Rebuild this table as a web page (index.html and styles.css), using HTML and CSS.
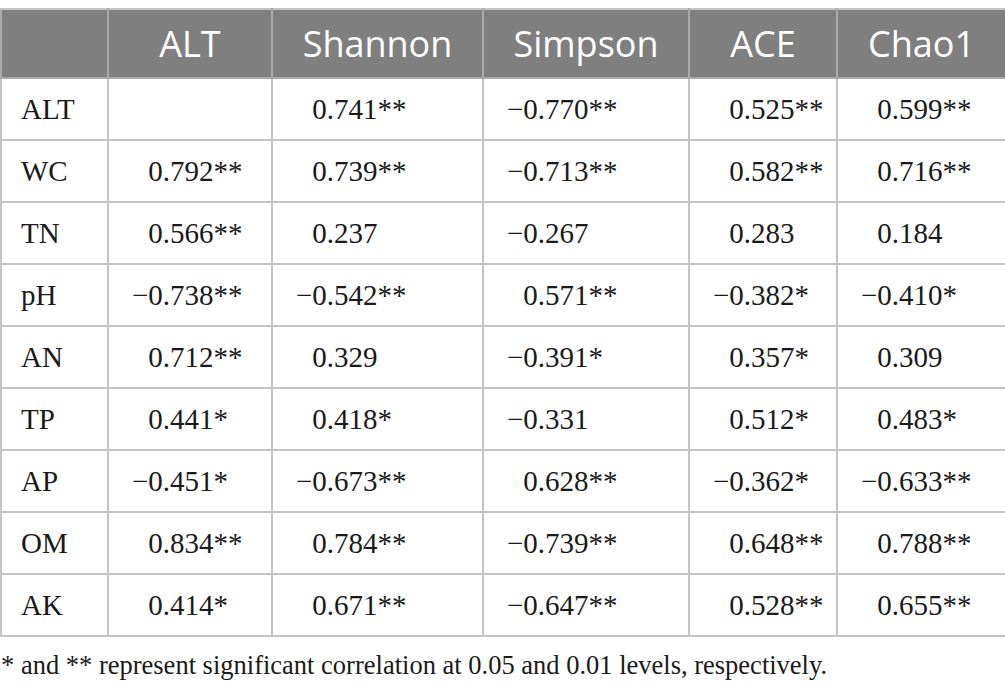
FILE: index.html
```html
<!DOCTYPE html>
<html lang="en">
<head>
    <meta charset="UTF-8">
    <title>Correlation table</title>
    <link rel="stylesheet" href="styles.css">
</head>
<body>
    <table class="corr">
        <colgroup>
            <col class="c-label">
            <col class="c-alt">
            <col class="c-shannon">
            <col class="c-simpson">
            <col class="c-ace">
            <col class="c-chao">
        </colgroup>
        <thead>
            <tr>
                <th></th>
                <th>ALT</th>
                <th>Shannon</th>
                <th>Simpson</th>
                <th>ACE</th>
                <th>Chao1</th>
            </tr>
        </thead>
        <tbody>
            <tr>
                <td>ALT</td>
                <td></td>
                <td><span class="sign">−</span>0.741**</td>
                <td>−0.770**</td>
                <td><span class="sign">−</span>0.525**</td>
                <td><span class="sign">−</span>0.599**</td>
            </tr>
            <tr>
                <td>WC</td>
                <td><span class="sign">−</span>0.792**</td>
                <td><span class="sign">−</span>0.739**</td>
                <td>−0.713**</td>
                <td><span class="sign">−</span>0.582**</td>
                <td><span class="sign">−</span>0.716**</td>
            </tr>
            <tr>
                <td>TN</td>
                <td><span class="sign">−</span>0.566**</td>
                <td><span class="sign">−</span>0.237</td>
                <td>−0.267</td>
                <td><span class="sign">−</span>0.283</td>
                <td><span class="sign">−</span>0.184</td>
            </tr>
            <tr>
                <td>pH</td>
                <td>−0.738**</td>
                <td>−0.542**</td>
                <td><span class="sign">−</span>0.571**</td>
                <td>−0.382*</td>
                <td>−0.410*</td>
            </tr>
            <tr>
                <td>AN</td>
                <td><span class="sign">−</span>0.712**</td>
                <td><span class="sign">−</span>0.329</td>
                <td>−0.391*</td>
                <td><span class="sign">−</span>0.357*</td>
                <td><span class="sign">−</span>0.309</td>
            </tr>
            <tr>
                <td>TP</td>
                <td><span class="sign">−</span>0.441*</td>
                <td><span class="sign">−</span>0.418*</td>
                <td>−0.331</td>
                <td><span class="sign">−</span>0.512*</td>
                <td><span class="sign">−</span>0.483*</td>
            </tr>
            <tr>
                <td>AP</td>
                <td>−0.451*</td>
                <td>−0.673**</td>
                <td><span class="sign">−</span>0.628**</td>
                <td>−0.362*</td>
                <td>−0.633**</td>
            </tr>
            <tr>
                <td>OM</td>
                <td><span class="sign">−</span>0.834**</td>
                <td><span class="sign">−</span>0.784**</td>
                <td>−0.739**</td>
                <td><span class="sign">−</span>0.648**</td>
                <td><span class="sign">−</span>0.788**</td>
            </tr>
            <tr>
                <td>AK</td>
                <td><span class="sign">−</span>0.414*</td>
                <td><span class="sign">−</span>0.671**</td>
                <td>−0.647**</td>
                <td><span class="sign">−</span>0.528**</td>
                <td><span class="sign">−</span>0.655**</td>
            </tr>
        </tbody>
    </table>
    <p class="note">* and ** represent significant correlation at 0.05 and 0.01 levels, respectively.</p>
</body>
</html>
```

FILE: styles.css
```css
* {
    margin: 0;
    padding: 0;
    box-sizing: border-box;
}

body {
    width: 1005px;
    padding-top: 8px;
    background: #ffffff;
    color: #1a1a1a;
    font-family: 'Liberation Serif', 'Times New Roman', serif;
}

.corr {
    width: 1005px;
    table-layout: fixed;
    border-collapse: collapse;
    font-size: 29px;
}

.c-label { width: 107px; }
.c-alt { width: 164px; }
.c-shannon { width: 211px; }
.c-simpson { width: 206px; }
.c-ace { width: 148px; }
.c-chao { width: 169px; }

.corr th {
    height: 69px;
    background: #7f7f7f;
    color: #ffffff;
    font-family: 'Open Sans', 'Noto Sans', sans-serif;
    font-size: 36px;
    font-weight: 400;
    text-align: center;
    border: 2px solid #a9a9a9;
    border-top-color: #c4c4c4;
}

.corr td {
    height: 62px;
    padding-left: 23px;
    border: 2px solid #c4c4c4;
    text-align: left;
    white-space: nowrap;
}

.corr td:first-child {
    padding-left: 19px;
}

.sign {
    visibility: hidden;
}

.note {
    margin-top: 13px;
    padding-left: 1px;
    font-size: 26.5px;
    color: #1a1a1a;
}
```
